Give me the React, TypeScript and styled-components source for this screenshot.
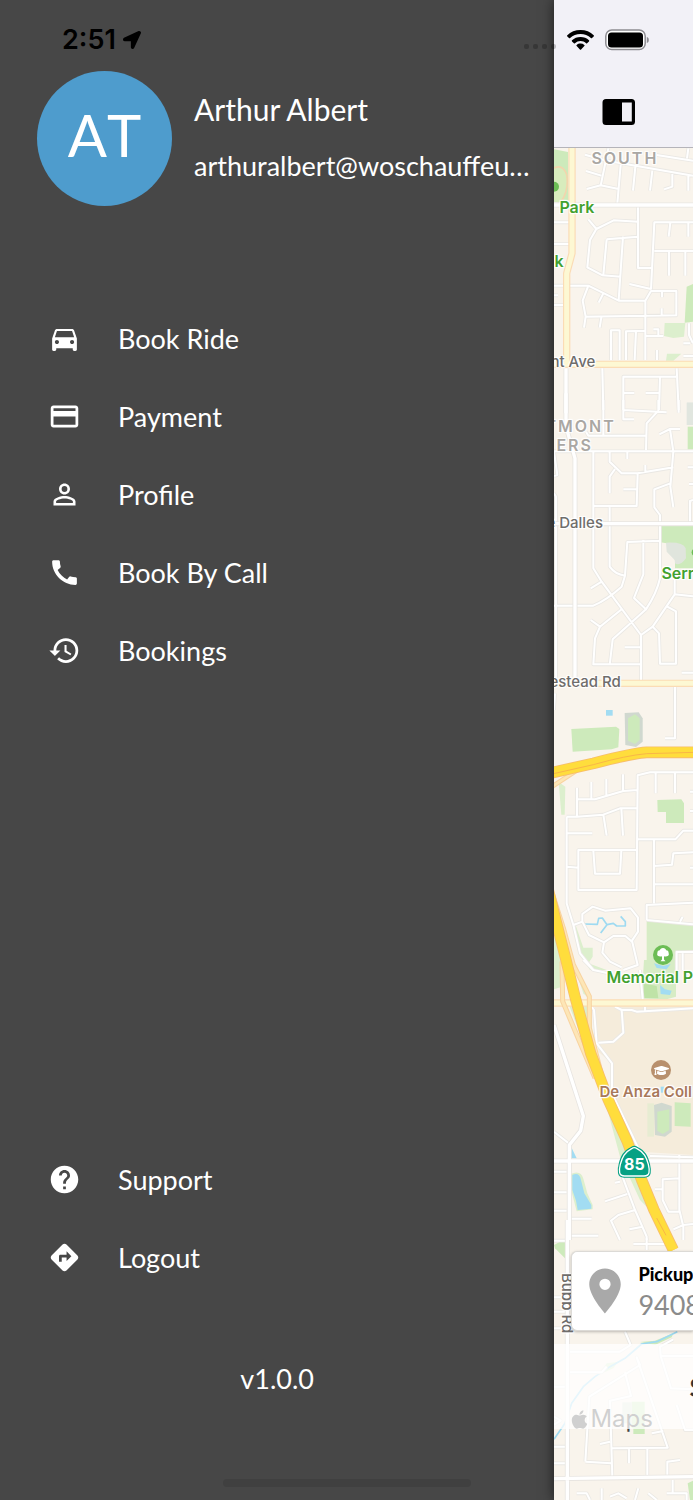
import React from "react";
import styled, { createGlobalStyle } from "styled-components";
import type { IconType } from "react-icons";
import {
  MdCall,
  MdDirections,
  MdDirectionsCar,
  MdHelp,
  MdHistory,
  MdPayment,
  MdPersonOutline,
  MdPlace,
} from "react-icons/md";
import { FaApple, FaGraduationCap, FaLocationArrow } from "react-icons/fa";

const GlobalStyle = createGlobalStyle`
  * { box-sizing: border-box; }
  body { margin: 0; background: #474747; }
  button { font: inherit; color: inherit; border: 0; background: none; padding: 0; cursor: pointer; }
  svg { display: block; flex: none; }
`;

const sans = `Lato, "Open Sans", sans-serif`;
const system = `Inter, "Liberation Sans", sans-serif`;

const Page = styled.div`
  position: relative;
  display: grid;
  grid-template-columns: 80% 20%;
  min-height: 100vh;
  overflow: hidden;
  font-family: ${sans};
`;

/* ---------- Drawer ---------- */

const Drawer = styled.aside`
  display: flex;
  flex-direction: column;
  min-width: 0;
  padding: 71px 0 103px;
  background: #474747;
  color: #fff;
`;

const Profile = styled.header`
  display: flex;
  gap: 22px;
  padding: 0 24px 0 37px;
`;

const Avatar = styled.div`
  display: flex;
  align-items: center;
  justify-content: center;
  flex: none;
  width: 135px;
  height: 135px;
  padding-bottom: 8px;
  border-radius: 50%;
  background: #4e9ccd;
  font-size: 58px;
  font-kerning: none;
`;

const Identity = styled.div`
  display: flex;
  flex-direction: column;
  gap: 20px;
  min-width: 0;
  padding-top: 19px;
  white-space: nowrap;
`;

const Name = styled.h1`
  margin: 0;
  font-size: 30px;
  line-height: 38px;
  font-weight: 400;
`;

const Email = styled.p`
  margin: 0;
  font-size: 27px;
  line-height: 36px;
`;

const Menu = styled.nav<{ $bottom?: boolean }>`
  display: flex;
  flex-direction: column;
  margin-top: ${(p) => (p.$bottom ? "auto" : "94px")};
`;

const MenuItem = styled.button`
  display: flex;
  align-items: center;
  gap: 37px;
  height: 78px;
  padding-left: 48px;
  font-size: 27px;
  line-height: 36px;
  text-align: left;

  svg {
    margin-bottom: 2px;
  }
`;

const Version = styled.p`
  margin: 64px 0 0;
  font-size: 27px;
  line-height: 36px;
  text-align: center;
`;

/* ---------- Front screen ---------- */

const Screen = styled.main`
  position: relative;
  display: flex;
  flex-direction: column;
  min-width: 0;
  background: #f9f4ec;
  box-shadow: 0 0 12px rgba(0, 0, 0, 0.6);
`;

const TopBar = styled.header`
  display: flex;
  align-items: flex-end;
  height: 148px;
  padding: 0 0 22px 48px;
  background: #f2f1f7;
  border-bottom: 1px solid #b5b4ba;
`;

const MapArea = styled.section`
  position: relative;
  display: flex;
  flex: 1;
  flex-direction: column;
  justify-content: flex-end;
  overflow: hidden;
`;

const MapCanvas = styled.svg`
  position: absolute;
  inset: 0;
  width: 100%;
  height: 100%;
`;

type Tone = "district" | "street" | "park" | "college";
const tones: Record<Tone, string> = {
  district: "color: #aaa7a3; font-weight: 600; letter-spacing: 2px;",
  street: "color: #6f6d6b; font-weight: 500; font-size: 15px;",
  park: "color: #43a12f; font-weight: 600;",
  college: "color: #a8795a; font-weight: 600; font-size: 15px;",
};

const MapLabel = styled.span<{ $x: number; $y: number; $tone: Tone; $vertical?: boolean }>`
  position: absolute;
  left: ${(p) => p.$x}px;
  top: ${(p) => p.$y}px;
  font-family: ${system};
  font-size: 16px;
  line-height: 20px;
  white-space: nowrap;
  ${(p) => tones[p.$tone]}
  ${(p) => (p.$vertical ? "writing-mode: vertical-rl;" : "")}
  text-shadow: 0 0 2px #fff, 1px 1px 1px #fff, -1px -1px 1px #fff, 1px -1px 1px #fff, -1px 1px 1px #fff;
`;

const MapPin = styled.span<{ $x: number; $y: number; $color: string }>`
  position: absolute;
  left: ${(p) => p.$x}px;
  top: ${(p) => p.$y}px;
  display: flex;
  align-items: center;
  justify-content: center;
  width: 20px;
  height: 20px;
  border-radius: 50%;
  background: ${(p) => p.$color};
  color: #fff;
`;

const Attribution = styled.span`
  position: absolute;
  left: 15px;
  bottom: 66px;
  display: flex;
  align-items: center;
  font-family: ${system};
  font-size: 24px;
  line-height: 30px;
  color: #454545;
`;

const PickupCard = styled.button`
  position: relative;
  display: flex;
  align-items: center;
  gap: 6px;
  height: 80px;
  margin: 0 0 13px 17px;
  padding-left: 6px;
  border: 1px solid #dcdad6;
  border-right: 0;
  border-radius: 6px 0 0 6px;
  background: #fff;
  box-shadow: 0 1px 3px rgba(0, 0, 0, 0.25);
  overflow: hidden;
  text-align: left;
`;

const PickupText = styled.span`
  display: flex;
  flex-direction: column;
  gap: 4px;
`;

const PickupTitle = styled.span`
  font-size: 18px;
  line-height: 24px;
  font-weight: 900;
  color: #000;
`;

const PickupValue = styled.span`
  font-size: 27px;
  line-height: 30px;
  color: #8b8b8b;
`;

const RideButton = styled.button`
  position: relative;
  height: 85px;
  margin-bottom: 71px;
  padding-left: 135px;
  overflow: hidden;
  background: rgba(255, 255, 255, 0.75);
  color: #333;
  font-size: 27px;
  line-height: 36px;
  font-weight: 700;
  text-align: left;
`;

/* ---------- System overlays ---------- */

const StatusBar = styled.div`
  position: absolute;
  inset: 0 0 auto 0;
  display: flex;
  align-items: center;
  height: 80px;
  padding: 0 44px 0 62px;
  font-family: ${system};
  font-size: 27px;
  line-height: 36px;
  font-weight: 600;
  color: #000;
  pointer-events: none;
`;

const Time = styled.time`
  margin-right: 7px;
`;

const Dots = styled.span`
  display: flex;
  gap: 4px;
  margin: 13px 0 0 auto;
`;

const Dot = styled.i`
  width: 5px;
  height: 5px;
  border-radius: 2px;
  background: rgba(0, 0, 0, 0.22);
`;

const Indicators = styled.span`
  display: flex;
  align-items: center;
  gap: 11px;
  margin-left: 11px;
`;

const HomeIndicator = styled.div`
  position: absolute;
  left: 50%;
  bottom: 13px;
  width: 248px;
  height: 8px;
  margin-left: -124px;
  border-radius: 4px;
  background: #404040;
`;

/* ---------- Map drawing ---------- */

const GREEN = "#cdeabb";
const PALE = "#dcefcd";
const GREY = "#d0d8cf";
const WATER = "#a2dcf2";

interface Tile {
  dy: number;
  areas: [string, string][];
  minor: string;
  major: string;
  arterial: string;
  water?: string;
}

/* Five stacked sections of the map, three units to the pixel. */
const tiles: Tile[] = [
  {
    dy: -24,
    areas: [
      [GREEN, "M42 28L84 36L86 190L42 185Z"],
      ["#d8ecbd", "M42 84Q70 72 82 104Q90 150 64 187L42 185Z"],
      [GREEN, "M440 440L459 432V545L434 548Z"],
      [PALE, "M374 549H436L432 590L400 594L372 588Z"],
      [PALE, "M381 641H424L400 662H378Z"],
      ["#e1e6df", "M441 788H459V810H441Z"],
    ],
    minor:
      "M135 44L200 62M205 25L182 137M138 93L184 107M140 147L182 136L236 147M242 75L232 190M200 62L459 107M350 45L459 62M445 25L441 55M286 80L279 152M337 92L330 152M397 98V140L372 148M445 106V152M145 238L169 267L221 241L294 245M169 267L150 300L142 382L188 406L242 410M294 200V384H338M200 298L294 290M200 298L190 405M249 290L236 480M459 247H343L333 448M391 247L386 290M445 247V290M343 333H459M387 333V407M436 333V407M42 437H145L236 482H316L333 453H409V526L135 530M268 432L333 447M145 437L128 482L137 530L132 563M184 532L179 563M190 460L176 488M366 455V472M365 505V526M316 482V660M213 660V571H239V660M258 660V574L316 572M288 574L284 660M316 588H370M340 568H355V588M351 630V660M42 247H92M42 312H92M42 495H72M187 685L190 810M250 810V710H408M360 710L357 810M410 685L416 810M247 759H283M317 759H360M447 550V585L459 610M430 610H450M430 648H459M42 466H54",
    major: "M42 195H459M78 685V820",
    arterial: "M96 24V340L80 400V675M42 673H459",
  },
  {
    dy: 756,
    areas: [
      [GREEN, "M361 378H459V505H405V480L380 430L361 427Z"],
      ["#e0e5dd", "M378 428Q430 425 437 445L438 475Q420 500 405 490L404 480L380 455Z"],
      [GREEN, "M443 80H459V148H443Z"],
      ["#e1e6df", "M440 8H459V75H440Z"],
    ],
    minor:
      "M190 0V105M250 0V30L380 37M250 30V58H282M355 0V32L320 70L318 150M138 95L145 107H318M416 0V38M42 155L52 225L42 228M358 103L390 87H420M390 87L400 155L391 260L400 322M42 154H459M160 155V318H290L293 220M209 155V185L245 220H293L400 202M225 207L209 230V280M262 155V177M316 195V218M250 268H293M391 250L343 268V322L360 345V535Q350 580 318 628L282 594L310 523V420M209 322V500Q225 523 255 527L262 426L360 422M160 318V505L185 545L303 705V840M152 565L185 545M42 617H160Q200 600 245 560L255 527M245 628L180 680L152 660M180 680L165 715L160 793H306M318 628L218 718L209 795M254 742H306M303 705L338 680L404 583V540M338 680L357 700L360 791H408V634L382 620M404 583L459 589M425 818H459M443 202H459M447 252H459M450 365V303L459 300M405 855V900M42 280L48 290V840",
    major: "M78 -20V80L105 175V840M42 371H459",
    arterial: "M42 850H459",
  },
  {
    dy: 1626,
    areas: [
      [GREEN, "M94 117L228 110L238 117L235 172L215 178L98 185Z"],
      [GREY, "M254 69L296 67L308 85V155L288 171L256 165Z"],
      [GREEN, "M264 85L285 73L299 85V150L285 162L264 152Z"],
      [WATER, "M198 60H218V77H198Z"],
      [GREEN, "M352 330L424 328L432 340V399H378V366H353Z"],
      [PALE, "M56 276L76 290L74 374H64Z"],
      ["#d7ecc5", "M320 692L459 705V780L410 786V840H320Z"],
      [PALE, "M105 700L130 773H158V800L145 820L200 840H150L118 790Z"],
      [PALE, "M42 740L62 760V840H42Z"],
      [WATER, "M340 812L356 830H385L398 808L400 825L385 840H350Z"],
    ],
    minor:
      "M45 10L42 60M405 0V145H375M459 247H330L293 256V300L250 303L165 328H111M293 256L290 600H115V480H290M111 293V380M154 276V328M199 267V318M249 253V303M80 380H111L190 374L240 355H290M190 374L200 437M244 355L249 437M80 380V640L100 705L120 790L160 840M80 430H157M80 530L115 533M160 482L165 551H240L244 482M347 247V310M405 247V310M290 448H406L430 422H459M342 448V640M459 487L400 490L396 524L342 528M342 583H459M459 305H450M459 363H450M459 533H450M320 690V645L459 638M320 690L459 703M420 695L428 680M100 705L127 695V672L158 650L195 662L272 655L294 683V725L276 752L293 825L250 840M127 695L147 735L192 757L220 738H256L276 755M192 757L187 788L210 815L245 832M410 840V786H459M428 790V840",
    major: "",
    arterial: "",
    water: "M133 702L172 703L176 685L187 684L201 704L182 729M201 704L220 700L230 708H256V695L242 679",
  },
  {
    dy: 2436,
    areas: [
      ["#f5ecdb", "M165 140H459V585L300 575L216 400V310L175 275Z"],
      [PALE, "M42 0H70L66 80L42 88Z"],
      [PALE, "M85 130H150L165 310L150 300Z"],
      [PALE, "M96 0L130 100L150 120L120 40Z"],
      [PALE, "M200 440L225 490L262 590L320 740L300 720L240 590Z"],
      ["#d7ecc5", "M312 0H408V110L380 118L305 115Z"],
      ["#bfe3a7", "M312 70L350 78L355 115H307Z"],
      [WATER, "M360 75L375 88L395 92L390 105L362 102Z"],
      [WATER, "M342 10L370 18L392 12L380 28L350 24Z"],
      [WATER, "M362 380H374V398H362Z"],
      ["#e7ecd2", "M322 430H342V530H322Z"],
      [GREY, "M342 435L365 428L395 438V515L375 530L345 525Z"],
      [GREEN, "M352 455L388 448V510L368 522L352 512Z"],
      [GREEN, "M404 427L452 430V500L404 498Z"],
      [PALE, "M92 642Q122 628 130 656L142 700L158 735V748L110 754L96 700Z"],
      [WATER, "M97 645Q118 635 123 660L133 700L154 735V746L113 750L108 722L97 690Z"],
      [WATER, "M94 562L110 595H92Z"],
    ],
    minor:
      "M155 140L162 150L170 250L216 310V400M175 248L220 245L250 218L245 150L225 140M245 150H275L290 155L459 145M315 140V155M130 0L160 30L205 40M300 30L308 118M42 515L90 553M42 635H80M42 697H80M42 752H80M90 776H155M90 827H175M330 588L459 592M418 585V750L430 800V840M418 655L368 658V720L385 755H418M345 688H368M225 668L240 665M195 724L262 702M236 620L285 750L320 830V840M240 840L213 782L235 765L285 750M268 808L308 800M400 808L430 795L459 792M216 400L300 575",
    major: "M42 195L130 468L122 512L88 555V840M42 603H459",
    arterial: "M42 129H459",
  },
  {
    dy: 3216,
    areas: [
      [GREEN, "M42 75L60 65H78V118L60 100L45 85Z"],
      [GREEN, "M300 366L345 362L400 340L395 352L345 375Z"],
      [GREEN, "M275 545H314V642H280V625H275Z"],
      ["#dde5d8", "M247 547H275V610H247Z"],
      [PALE, "M200 430L235 425L220 445L175 465Z"],
      [GREEN, "M443 790L459 782V840H450Z"],
    ],
    minor:
      "M320 55V90M280 72H380M42 62H82M42 232H82M42 275H82M42 325H82M90 395H240L272 375L255 335M90 457H185L200 440M136 725L148 530L300 435L290 412L383 683L215 685M255 457L273 528L210 542L217 770M136 725L215 730M180 672L210 665M267 685V730M322 685V770M335 640L370 633M382 770V725L420 720M398 780V820M400 358L360 380L362 408H459M362 408L393 505L459 508M410 555L435 630H459M42 500H82M42 590L62 602L42 614M42 680H82M42 730H82M110 820H140L150 840M185 840V805M210 830L235 820L260 835M295 805L285 840M325 820L350 840M380 820H440V840",
    major: "M82 0V840M42 776L459 770",
    arterial: "",
    water: "M42 658L75 610L95 550L130 500L165 470L210 440L255 415L305 372L350 365L412 335",
  },
];

const Layer = ({ part, color, width }: { part: "minor" | "major" | "arterial" | "water"; color: string; width: number }) => (
  <g fill="none" stroke={color} strokeWidth={width} strokeLinejoin="round">
    {tiles.map((t) => (
      <path key={t.dy} d={t[part] ?? ""} transform={`translate(0 ${t.dy})`} />
    ))}
  </g>
);

const freeway = "M20 2206L50 2326L78 2436L106 2550L152 2716L205 2856L262 2981L305 3096L342 3186L400 3306";
const freewayRamps =
  "M38 2240L70 2340L100 2450L148 2545V2640L190 2800M66 2440L68 2560L110 2660L165 2790";
const interstate = "M36 1874L160 1846Q280 1815 320 1813H465";
const interstateMedian = "M36 1878L160 1850Q260 1822 320 1817L465 1813";

const CityMap = () => (
  <MapCanvas viewBox="42 0 417 4056" preserveAspectRatio="xMinYMin slice" aria-hidden="true">
    <rect x="0" y="0" width="2400" height="4056" fill="#f9f4ec" />
    {tiles.map((t) => (
      <g key={t.dy} transform={`translate(0 ${t.dy})`}>
        {t.areas.map(([fill, d]) => (
          <path key={d} d={d} fill={fill} />
        ))}
      </g>
    ))}
    <path d="M42 60Q70 48 80 80Q88 126 62 163" fill="none" stroke="#f2d5ad" strokeWidth="5" />
    <Layer part="water" color="#9edaf1" width={5} />
    <Layer part="minor" color="#eae8e4" width={11} />
    <Layer part="minor" color="#ffffff" width={6} />
    <Layer part="major" color="#e8e5e1" width={15} />
    <Layer part="major" color="#ffffff" width={10} />
    <Layer part="arterial" color="#fbdcb5" width={22} />
    <Layer part="arterial" color="#fdf8d3" width={15} />
    <g fill="none" strokeLinejoin="round">
      <path d="M36 1916L112 1866" stroke="#f8d3a0" strokeWidth="14" />
      <path d="M36 1916L112 1866" stroke="#fde6b6" strokeWidth="8" />
      <path d={freewayRamps} stroke="#f8d3a0" strokeWidth="15" />
      <path d={freewayRamps} stroke="#fde6b6" strokeWidth="9" />
      <path d={interstate} stroke="#f7bd6b" strokeWidth="35" />
      <path d={interstate} stroke="#ffdd3c" strokeWidth="30" />
      <path d={interstateMedian} stroke="#f9b648" strokeWidth="3" />
      <path d={freeway} stroke="#f7bd6b" strokeWidth="34" />
      <path d={freeway} stroke="#ffdd3c" strokeWidth="29" />
      <path d="M350 3210L378 3262" stroke="#f9b648" strokeWidth="3" />
    </g>
    <circle cx="42" cy="116" r="15" fill="#6cbd55" />
    <circle cx="466" cy="1213" r="11" fill="#6cbd55" />
    <path
      d="M273 2997Q283 2989 293 2997C316 3008 324 3024 330 3048Q334 3064 332 3076Q329 3089 314 3089H252Q237 3089 234 3076Q232 3064 236 3048C242 3024 250 3008 273 2997Z"
      fill="#07a184"
    />
    <path
      d="M275 3002Q283 2996 291 3002C312 3013 319 3027 325 3049Q329 3064 327 3074Q325 3084 312 3084H254Q241 3084 239 3074Q237 3064 241 3049C247 3027 254 3013 275 3002Z"
      fill="none"
      stroke="#fff"
      strokeWidth="4"
    />
  </MapCanvas>
);

const RouteNumber = styled.span`
  position: absolute;
  left: 63px;
  top: 1006px;
  width: 34px;
  font-family: ${system};
  font-size: 16px;
  line-height: 20px;
  font-weight: 700;
  text-align: center;
  color: #fff;
`;

const labels: { text: string; x: number; y: number; tone: Tone; vertical?: boolean }[] = [
  { text: "SOUTH", x: 37, y: 0, tone: "district" },
  { text: "Park", x: 5, y: 49, tone: "park" },
  { text: "k", x: 0, y: 103, tone: "park" },
  { text: "nt Ave", x: -4, y: 204, tone: "street" },
  { text: "TMONT", x: -9, y: 268, tone: "district" },
  { text: "ERS", x: 2, y: 287, tone: "district" },
  { text: "e Dalles", x: -8, y: 365, tone: "street" },
  { text: "Serr", x: 107, y: 415, tone: "park" },
  { text: "estead Rd", x: -5, y: 524, tone: "street" },
  { text: "Memorial P", x: 52, y: 819, tone: "park" },
  { text: "De Anza Coll", x: 45, y: 934, tone: "college" },
  { text: "Bubb Rd", x: 3, y: 1125, tone: "street", vertical: true },
];

/* ---------- Icons ---------- */

const WifiIcon = () => (
  <svg width="27" height="20" viewBox="0 0 27 20" fill="#000" aria-hidden="true">
    <path d="M13.500 0C8.300 0 3.600 1.900.3 5.300a.8.800 0 0 0 0 1.100l1.700 1.700a.8.800 0 0 0 1.100 0C5.900 5.400 9.500 4 13.500 4s7.600 1.400 10.400 4.100a.8.800 0 0 0 1.100 0l1.700-1.700a.8.800 0 0 0 0-1.100C23.400 1.900 18.700 0 13.500 0Z" />
    <path d="M13.500 7c-3.300 0-6.300 1.200-8.500 3.300a.8.800 0 0 0 0 1.100L6.900 13.200a.8.800 0 0 0 1 0A8.300 8.300 0 0 1 13.500 11c2.100 0 4.100.8 5.600 2.200a.8.800 0 0 0 1 0L22 11.400a.8.800 0 0 0 0-1.100A12.300 12.300 0 0 0 13.500 7Z" />
    <path d="M13.500 13.600c-1.500 0-2.800.5-3.800 1.300a.8.800 0 0 0 0 1.200l3.200 3.400a.8.800 0 0 0 1.200 0l3.200-3.400a.8.800 0 0 0 0-1.200 6 6 0 0 0-3.800-1.300Z" />
  </svg>
);

const BatteryIcon = () => (
  <svg width="44" height="22" viewBox="0 0 44 22" aria-hidden="true">
    <rect x="0.800" y="1" width="39.400" height="19.600" rx="6" fill="#fff" stroke="#8d8c91" strokeWidth="1.500" />
    <rect x="3" y="3.400" width="35" height="15" rx="3.500" fill="#000" />
    <path d="M41.800 8c1.600.4 2 1.500 2 3s-.4 2.600-2 3Z" fill="#8d8c91" />
  </svg>
);

const PanelIcon = () => (
  <svg width="34" height="26" viewBox="0 0 34 26" aria-hidden="true">
    <path fillRule="evenodd" d="M4 0H29.500Q33 0 33 3.500V22.500Q33 26 29.500 26H4Q.5 26 .5 22.500V3.500Q.5 0 4 0ZM20 3.500V22.500H29.800V3.500Z" />
  </svg>
);

const TreeIcon = () => (
  <svg width="14" height="16" viewBox="0 0 14 16" fill="currentColor" aria-hidden="true">
    <path d="M7 1C8.800 1 9.900 2 10.200 3.300C11.800 3.400 12.800 4.500 12.600 6C13.400 7.600 12.400 9.200 10.700 9.200C9.800 9.700 8.700 9.600 8 9.200V12.600L9.500 14.200H4.500L6 12.600V9.200C5.300 9.600 4.200 9.700 3.300 9.200C1.600 9.200.6 7.600 1.400 6C1.200 4.500 2.200 3.400 3.800 3.300C4.100 2 5.200 1 7 1Z" />
  </svg>
);

const mainItems: [IconType, string][] = [
  [MdDirectionsCar, "Book Ride"],
  [MdPayment, "Payment"],
  [MdPersonOutline, "Profile"],
  [MdCall, "Book By Call"],
  [MdHistory, "Bookings"],
];

const footerItems: [IconType, string][] = [
  [MdHelp, "Support"],
  [MdDirections, "Logout"],
];

const MenuList = ({ items, bottom }: { items: [IconType, string][]; bottom?: boolean }) => (
  <Menu $bottom={bottom} aria-label={bottom ? "Account" : "Main"}>
    {items.map(([Icon, label]) => (
      <MenuItem key={label} type="button">
        <Icon size={33} aria-hidden="true" />
        {label}
      </MenuItem>
    ))}
  </Menu>
);

export default function App() {
  return (
    <>
      <GlobalStyle />
      <Page>
        <Drawer>
          <Profile>
            <Avatar>AT</Avatar>
            <Identity>
              <Name>Arthur Albert</Name>
              <Email>arthuralbert@woschauffeu…</Email>
            </Identity>
          </Profile>
          <MenuList items={mainItems} />
          <MenuList items={footerItems} bottom />
          <Version>v1.0.0</Version>
        </Drawer>

        <Screen>
          <TopBar>
            <button type="button" aria-label="Toggle menu">
              <PanelIcon />
            </button>
          </TopBar>
          <MapArea>
            <CityMap />
            {labels.map((l) => (
              <MapLabel key={l.text} $x={l.x} $y={l.y} $tone={l.tone} $vertical={l.vertical}>
                {l.text}
              </MapLabel>
            ))}
            <RouteNumber>85</RouteNumber>
            <MapPin $x={99} $y={797} $color="#6cbd55">
              <TreeIcon />
            </MapPin>
            <MapPin $x={97} $y={912} $color="#b8906d">
              <FaGraduationCap size={15} />
            </MapPin>
            <Attribution>
              <FaApple size={21} aria-hidden="true" />
              Maps
            </Attribution>
            <PickupCard type="button">
              <MdPlace size={54} color="#a9a9a9" aria-hidden="true" />
              <PickupText>
                <PickupTitle>Pickup</PickupTitle>
                <PickupValue>9408</PickupValue>
              </PickupText>
            </PickupCard>
            <RideButton type="button">S</RideButton>
          </MapArea>
        </Screen>

        <StatusBar>
          <Time>2:51</Time>
          <FaLocationArrow size={18} aria-hidden="true" />
          <Dots aria-hidden="true">
            <Dot />
            <Dot />
            <Dot />
            <Dot />
          </Dots>
          <Indicators>
            <WifiIcon />
            <BatteryIcon />
          </Indicators>
        </StatusBar>
        <HomeIndicator />
      </Page>
    </>
  );
}
